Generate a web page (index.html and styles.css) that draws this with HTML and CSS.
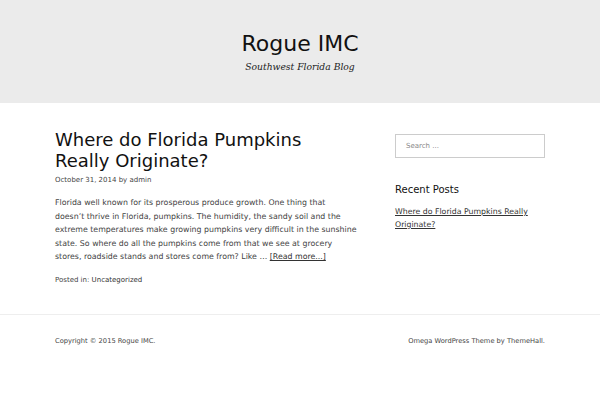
FILE: index.html
```html
<!DOCTYPE html>
<html>
<head>
<meta charset="utf-8">
<link rel="stylesheet" href="styles.css">
</head>
<body>
<header class="site-header">
  <h1 class="site-title">Rogue IMC</h1>
  <p class="site-desc">Southwest Florida Blog</p>
</header>
<div class="site-main">
  <main class="content">
    <h2 class="entry-title">Where do Florida Pumpkins Really Originate?</h2>
    <div class="entry-meta">October 31, 2014 by admin</div>
    <p class="entry-summary">Florida well known for its prosperous produce growth. One thing that<br>doesn’t thrive in Florida, pumpkins. The humidity, the sandy soil and the extreme temperatures make growing pumpkins very difficult in the sunshine state. So where do all the pumpkins come from that we see at grocery stores, roadside stands and stores come from? Like … <a href="#" class="more">[Read more...]</a></p>
    <div class="entry-footer">Posted in: <a href="#">Uncategorized</a></div>
  </main>
  <aside class="sidebar">
    <div class="search-box">Search ...</div>
    <h3 class="widget-title">Recent Posts</h3>
    <a href="#" class="recent-link">Where do Florida Pumpkins Really Originate?</a>
  </aside>
</div>
<footer class="site-footer">
  <div class="footer-inner">
    <span>Copyright © 2015 Rogue IMC.</span>
    <span>Omega WordPress Theme by ThemeHall.</span>
  </div>
</footer>
</body>
</html>
```
FILE: styles.css
```css
* { box-sizing: border-box; }
html, body { margin: 0; padding: 0; background: #fff; }
body {
  font-family: "DejaVu Sans", sans-serif;
  font-size: 7px;
  color: #444;
}
a { color: #333; }
.site-header {
  background: #ebebeb;
  height: 103px;
  text-align: center;
  padding-top: 30px;
}
.site-title {
  margin: 0;
  font-size: 22px;
  font-weight: normal;
  line-height: 28px;
  color: #111;
}
.site-desc {
  margin: 2px 0 0;
  font-family: "DejaVu Serif", serif;
  font-style: italic;
  font-size: 9.2px;
  line-height: 14px;
  color: #222;
}
.site-main {
  display: flex;
  justify-content: space-between;
  width: 490px;
  margin: 0 auto;
  padding-top: 26px;
  height: 211px;
}
.content { width: 305px; flex: none; }
.entry-title {
  margin: 0;
  font-size: 18px;
  font-weight: normal;
  line-height: 21px;
  color: #111;
}
.entry-meta {
  margin-top: 3px;
  line-height: 12px;
  color: #444;
}
.entry-summary {
  margin: 10px 0 0;
  font-size: 7.85px;
  line-height: 13.6px;
}
.more { color: #333; }
.entry-footer {
  margin-top: 10px;
  line-height: 12px;
}
.entry-footer a { text-decoration: none; }
.sidebar { width: 150px; flex: none; padding-top: 5px; }
.search-box {
  height: 24px;
  border: 1px solid #ccc;
  padding: 0 10px;
  line-height: 22px;
  color: #888;
  font-size: 7px;
}
.widget-title {
  margin: 25px 0 0;
  font-size: 10px;
  font-weight: normal;
  line-height: 14px;
  color: #111;
}
.recent-link {
  display: block;
  margin-top: 8px;
  font-size: 7.8px;
  line-height: 13px;
}
.site-footer {
  border-top: 1px solid #eee;
}
.footer-inner {
  width: 490px;
  margin: 0 auto;
  display: flex;
  justify-content: space-between;
  padding-top: 20px;
  font-size: 6.7px;
  line-height: 12px;
}
```
